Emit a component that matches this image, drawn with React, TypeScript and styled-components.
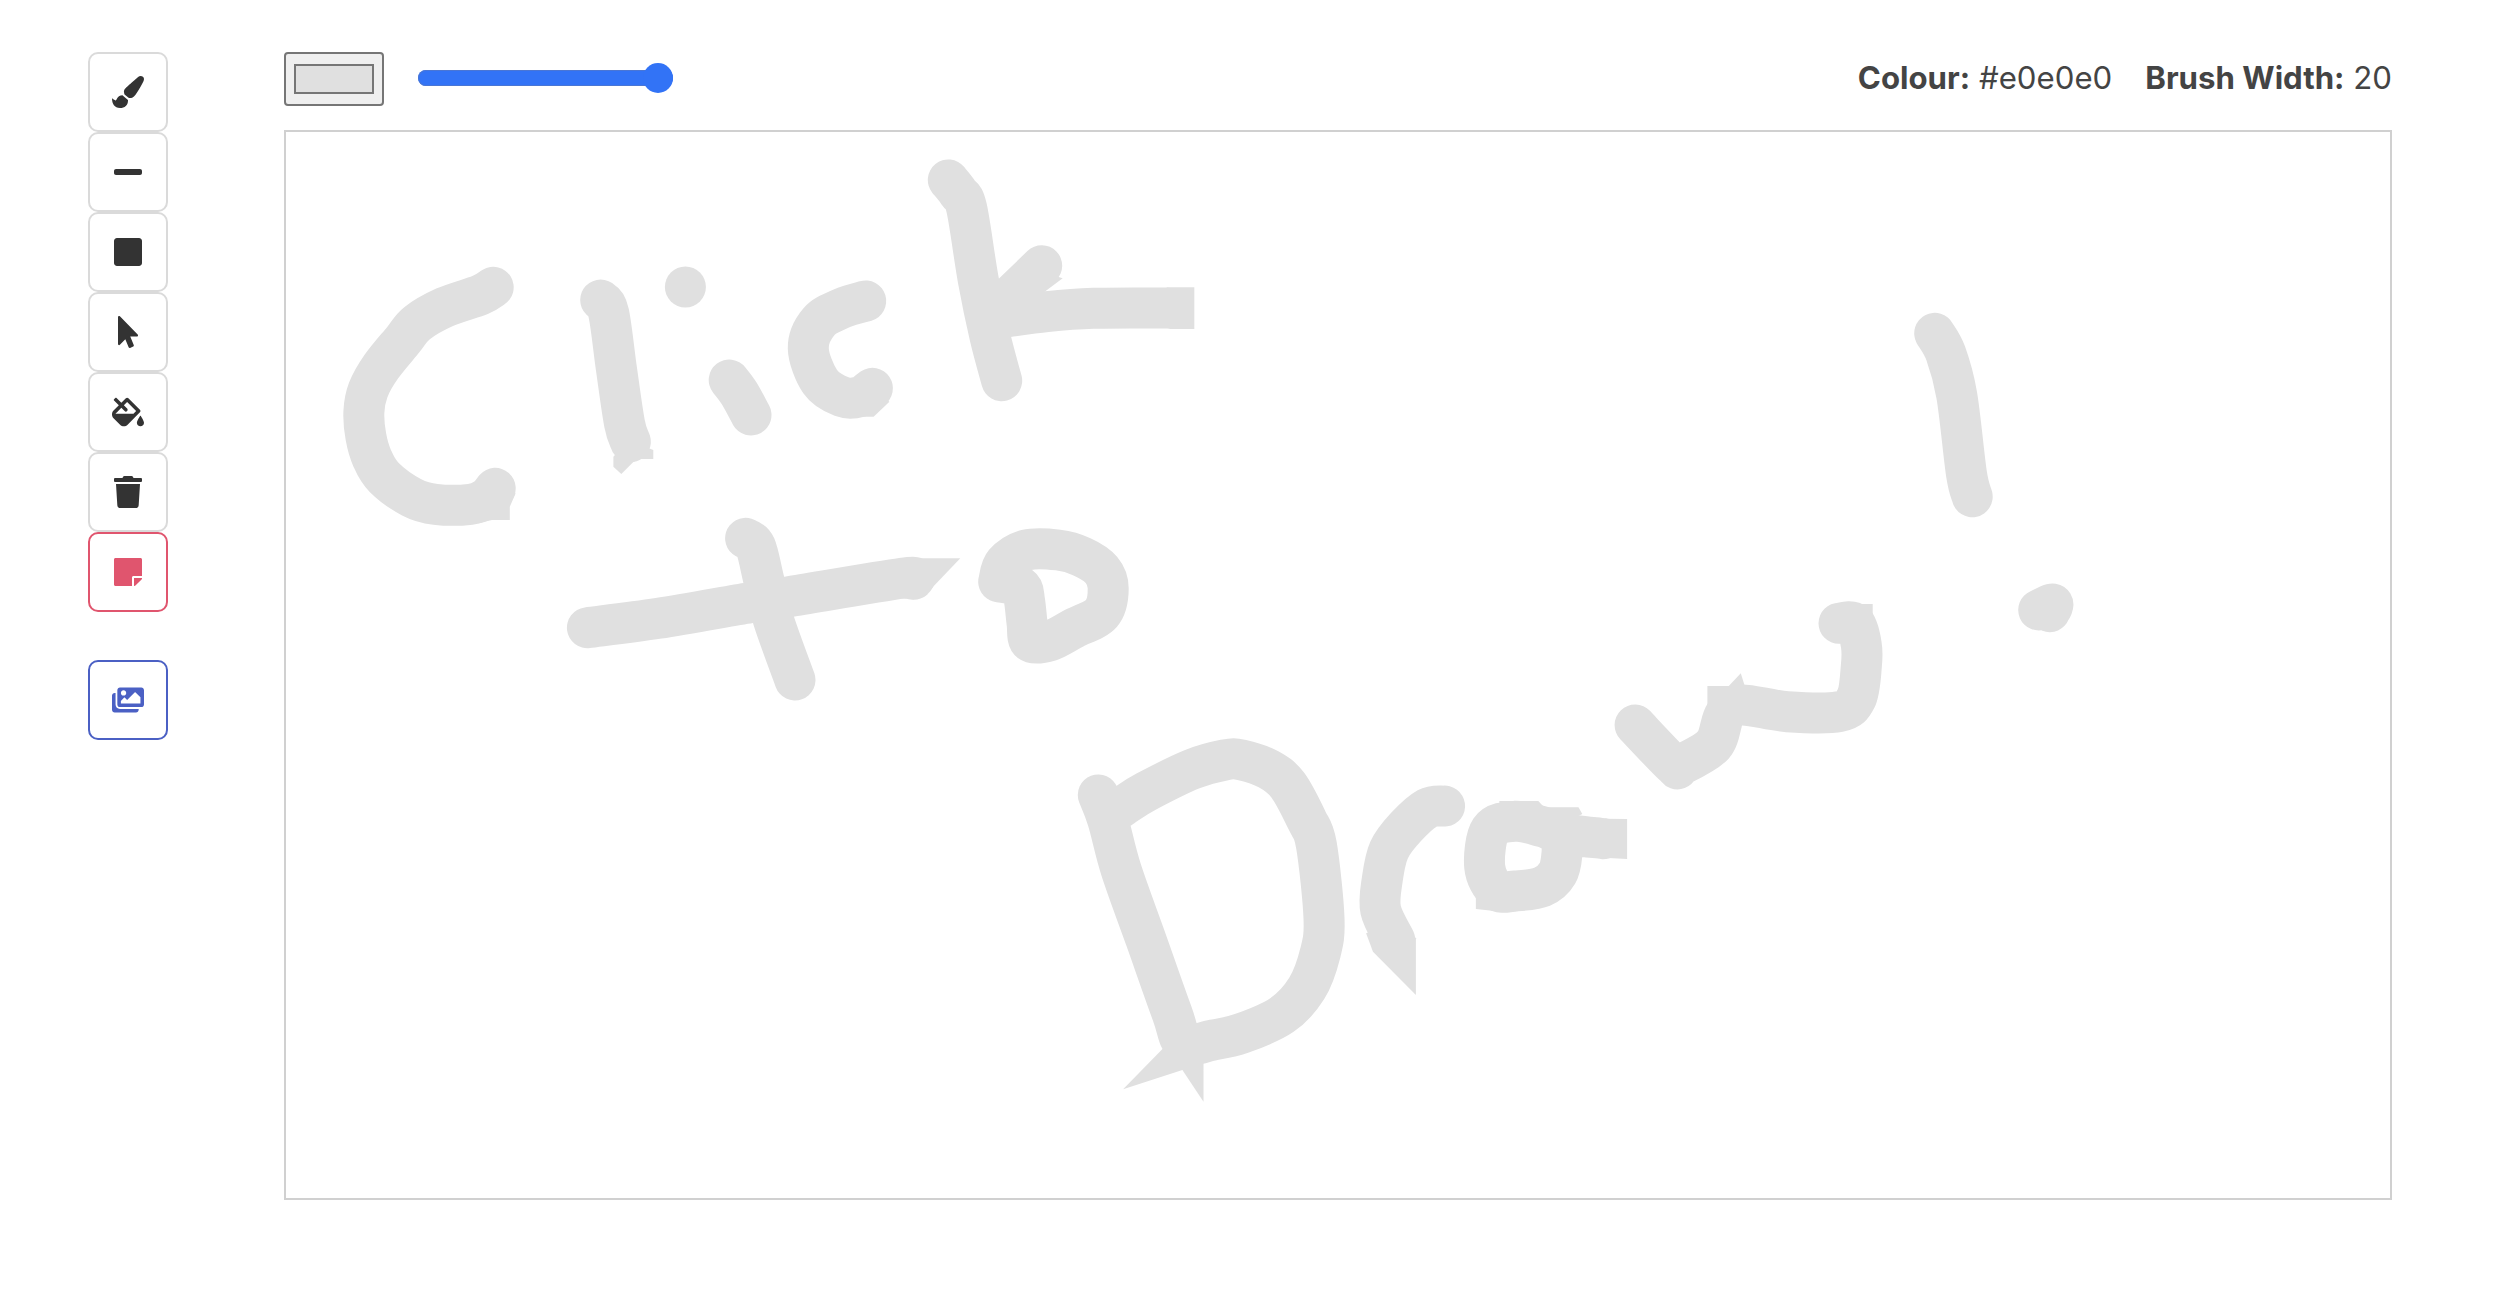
import React from "react";
import styled, { createGlobalStyle } from "styled-components";
import {
  FaPaintBrush,
  FaMinus,
  FaSquare,
  FaMousePointer,
  FaFillDrip,
  FaTrash,
  FaStickyNote,
  FaImages,
} from "react-icons/fa";

const GlobalStyle = createGlobalStyle`
  html, body { margin: 0; padding: 0; background: #fff; }
  body { font-family: Inter, "Liberation Sans", sans-serif; }
`;

const Page = styled.div`
  display: flex;
  align-items: flex-start;
  padding: 52px 118px 0 88px;
  height: 1304px;
  box-sizing: border-box;
`;

const Sidebar = styled.nav`
  display: flex;
  flex-direction: column;
  width: 80px;
  flex: none;
  margin-right: 116px;
`;

const ToolGroup = styled.div`
  display: flex;
  flex-direction: column;
  margin-bottom: 48px;
`;

const ToolButton = styled.button<{ $tone?: string }>`
  display: flex;
  align-items: center;
  justify-content: center;
  width: 80px;
  height: 80px;
  padding: 0;
  background: #fff;
  border: 2px solid ${(p) => p.$tone ?? "#dadada"};
  border-radius: 10px;
  color: ${(p) => p.$tone ?? "#333"};
  font-size: 32px;
  box-sizing: border-box;
`;

const Main = styled.main`
  flex: 1;
  min-width: 0;
  display: flex;
  flex-direction: column;
`;

const Toolbar = styled.div`
  display: flex;
  align-items: center;
  height: 54px;
  margin-bottom: 24px;
`;

const Swatch = styled.div`
  display: flex;
  align-items: center;
  justify-content: center;
  width: 100px;
  height: 54px;
  box-sizing: border-box;
  background: #efefef;
  border: 2px solid #767676;
  border-radius: 4px;
  margin-right: 34px;
`;

const SwatchColour = styled.div`
  width: 80px;
  height: 30px;
  box-sizing: border-box;
  background: #e0e0e0;
  border: 2px solid #767676;
`;

const Slider = styled.div`
  position: relative;
  width: 255px;
  height: 16px;
  margin-bottom: 2px;
  background: #3273f6;
  border-radius: 8px;
  box-shadow: inset 0 0 0 1px #4a76d4;
`;

const SliderThumb = styled.div`
  position: absolute;
  right: 0;
  top: -7px;
  width: 30px;
  height: 30px;
  border-radius: 50%;
  background: #3273f6;
`;

const Readout = styled.div`
  margin-left: auto;
  margin-bottom: 3px;
  display: flex;
  gap: 33px;
  font-size: 31.2px;
  color: #444;
`;

const ReadoutLabel = styled.b`
  font-weight: 700;
`;

const CanvasFrame = styled.div`
  height: 1070px;
  box-sizing: border-box;
  border: 2px solid #d0d0d0;
  background: #fff;
`;

const Drawing = styled.svg`
  display: block;
  width: 100%;
  height: 100%;
`;

type Crop = { x: number; y: number; sx: number; sy: number };
type Pt = [number, number];
const map = (c: Crop, pts: number[]) => {
  const out: Pt[] = [];
  for (let i = 0; i < pts.length; i += 2) {
    out.push([c.x + pts[i] * c.sx, c.y + pts[i + 1] * c.sy]);
  }
  return out;
};
const fmt = (p: Pt) => `${p[0].toFixed(1)},${p[1].toFixed(1)}`;
const line = (c: Crop, pts: number[]) => {
  const p = map(c, pts);
  if (p.length < 3) return "M" + p.map(fmt).join(" L");
  let d = "M" + fmt(p[0]);
  for (let i = 0; i < p.length - 1; i++) {
    const p0 = p[Math.max(i - 1, 0)];
    const p1 = p[i];
    const p2 = p[i + 1];
    const p3 = p[Math.min(i + 2, p.length - 1)];
    const c1: Pt = [p1[0] + (p2[0] - p0[0]) / 6, p1[1] + (p2[1] - p0[1]) / 6];
    const c2: Pt = [p2[0] - (p3[0] - p1[0]) / 6, p2[1] - (p3[1] - p1[1]) / 6];
    d += ` C${fmt(c1)} ${fmt(c2)} ${fmt(p2)}`;
  }
  return d;
};
const poly = (c: Crop, pts: number[]) => map(c, pts).map(fmt).join(" ");

const A: Crop = { x: 320, y: 140, sx: 620 / 1568, sy: 1 / 3 };
const B: Crop = { x: 880, y: 140, sx: 1 / 3, sy: 1 / 3 };
const C: Crop = { x: 540, y: 500, sx: 620 / 1568, sy: 1 / 3 };
const D: Crop = { x: 1060, y: 720, sx: 600 / 1568, sy: 1 / 3 };
const E: Crop = { x: 1560, y: 290, sx: 540 / 1568, sy: 1 / 3 };

const strokes: string[] = [
  line(A, [438,442, 405,465, 315,502, 245,550, 210,600, 155,680, 122,750, 111,815, 116,890, 132,955, 162,1012, 232,1072, 292,1093, 380,1093, 420,1075, 443,1045]),
  line(A, [710,480, 730,518, 750,690, 770,850, 785,905]),
  line(A, [924,441, 924,441]),
  line(A, [1035,720, 1060,760, 1090,825]),
  line(A, [1380,483, 1320,505, 1262,545, 1235,625, 1265,725, 1320,770, 1365,770, 1397,745]),
  line(B, [205,120, 235,158, 260,205, 295,420, 330,590, 365,722]),
  line(B, [485,377, 400,460]),
  line(B, [350,535, 500,515, 640,505, 860,504]),
  line(C, [520,115, 545,140, 566,240, 590,358, 645,540]),
  line(C, [120,383, 300,355, 530,308, 630,290, 915,235, 945,238]),
  line(C, [1160,245, 1175,190, 1230,150, 1310,150, 1370,170, 1420,210, 1437,265, 1420,340, 1350,385, 1290,422, 1240,425, 1232,370, 1225,300, 1215,260, 1160,245]),
  line(D, [100,225, 125,300, 160,450, 225,660, 293,880, 325,970, 400,960, 475,940, 580,885, 645,805, 680,700, 690,595, 670,375, 645,300, 595,195, 545,148, 475,120, 430,120, 345,148, 225,215, 165,258, 125,290]),
  line(D, [1005,258, 960,265, 905,320, 860,390, 842,480, 838,570, 875,660]),
  line(D, [1420,356, 1310,340, 1260,320, 1190,304, 1125,330, 1110,440, 1140,510, 1190,513, 1260,500, 1300,460, 1312,400, 1310,340]),
  line(E, [218,1305, 330,1425, 350,1425, 445,1365, 478,1275, 525,1245, 660,1265, 810,1265, 860,1225, 875,1130, 875,1065, 855,1000, 810,1000]),
  line(E, [1088,130, 1120,190, 1152,315, 1180,550, 1197,620]),
  line(E, [1390,960, 1430,942, 1422,965]),
];

const patches: string[] = [
  poly(A, [400,1150, 435,1140, 480,1140, 480,1100, 495,1060, 430,1060]),
  poly(A, [742,950, 742,980, 762,1002, 800,957, 843,957, 843,930, 780,900]),
  poly(A, [1360,830, 1400,830, 1440,785, 1397,745]),
  poly(B, [860,442, 943,442, 943,567, 870,567, 850,560]),
  poly(B, [490,458, 548,415, 500,400]),
  poly(C, [910,175, 1063,175, 970,290, 945,298, 915,295]),
  poly(D, [278,975, 165,1108, 320,1050, 375,1145, 375,1030, 330,950]),
  poly(D, [800,640, 818,695, 930,825, 930,655, 890,600]),
  poly(D, [1420,296, 1482,297, 1482,417, 1420,413]),
  poly(D, [1087,525, 1087,567, 1135,573, 1130,530]),
  poly(D, [1148,243, 1250,243, 1265,262, 1355,262, 1365,282, 1300,320, 1150,300]),
  poly(E, [428,1188, 490,1188, 525,1150, 540,1200, 500,1300, 428,1258]),
  poly(E, [810,942, 908,942, 908,985, 860,1000]),
];

export default function App() {
  return (
    <>
      <GlobalStyle />
      <Page>
        <Sidebar>
          <ToolGroup>
            <ToolButton><FaPaintBrush /></ToolButton>
            <ToolButton><FaMinus /></ToolButton>
            <ToolButton><FaSquare /></ToolButton>
            <ToolButton><FaMousePointer /></ToolButton>
            <ToolButton><FaFillDrip /></ToolButton>
            <ToolButton><FaTrash /></ToolButton>
            <ToolButton $tone="#e0556e"><FaStickyNote /></ToolButton>
          </ToolGroup>
          <ToolButton $tone="#4b60c4"><FaImages /></ToolButton>
        </Sidebar>
        <Main>
          <Toolbar>
            <Swatch><SwatchColour /></Swatch>
            <Slider><SliderThumb /></Slider>
            <Readout>
              <span><ReadoutLabel>Colour:</ReadoutLabel> #e0e0e0</span>
              <span><ReadoutLabel>Brush Width:</ReadoutLabel> 20</span>
            </Readout>
          </Toolbar>
          <CanvasFrame>
            <Drawing viewBox="286 132 2104 1066" preserveAspectRatio="xMinYMin">
              <g fill="none" stroke="#e0e0e0" strokeWidth={41} strokeLinecap="round" strokeLinejoin="round">
                {strokes.map((d, i) => <path key={i} d={d} />)}
              </g>
              <g fill="#e0e0e0">
                {patches.map((p, i) => <polygon key={i} points={p} />)}
              </g>
            </Drawing>
          </CanvasFrame>
        </Main>
      </Page>
    </>
  );
}
